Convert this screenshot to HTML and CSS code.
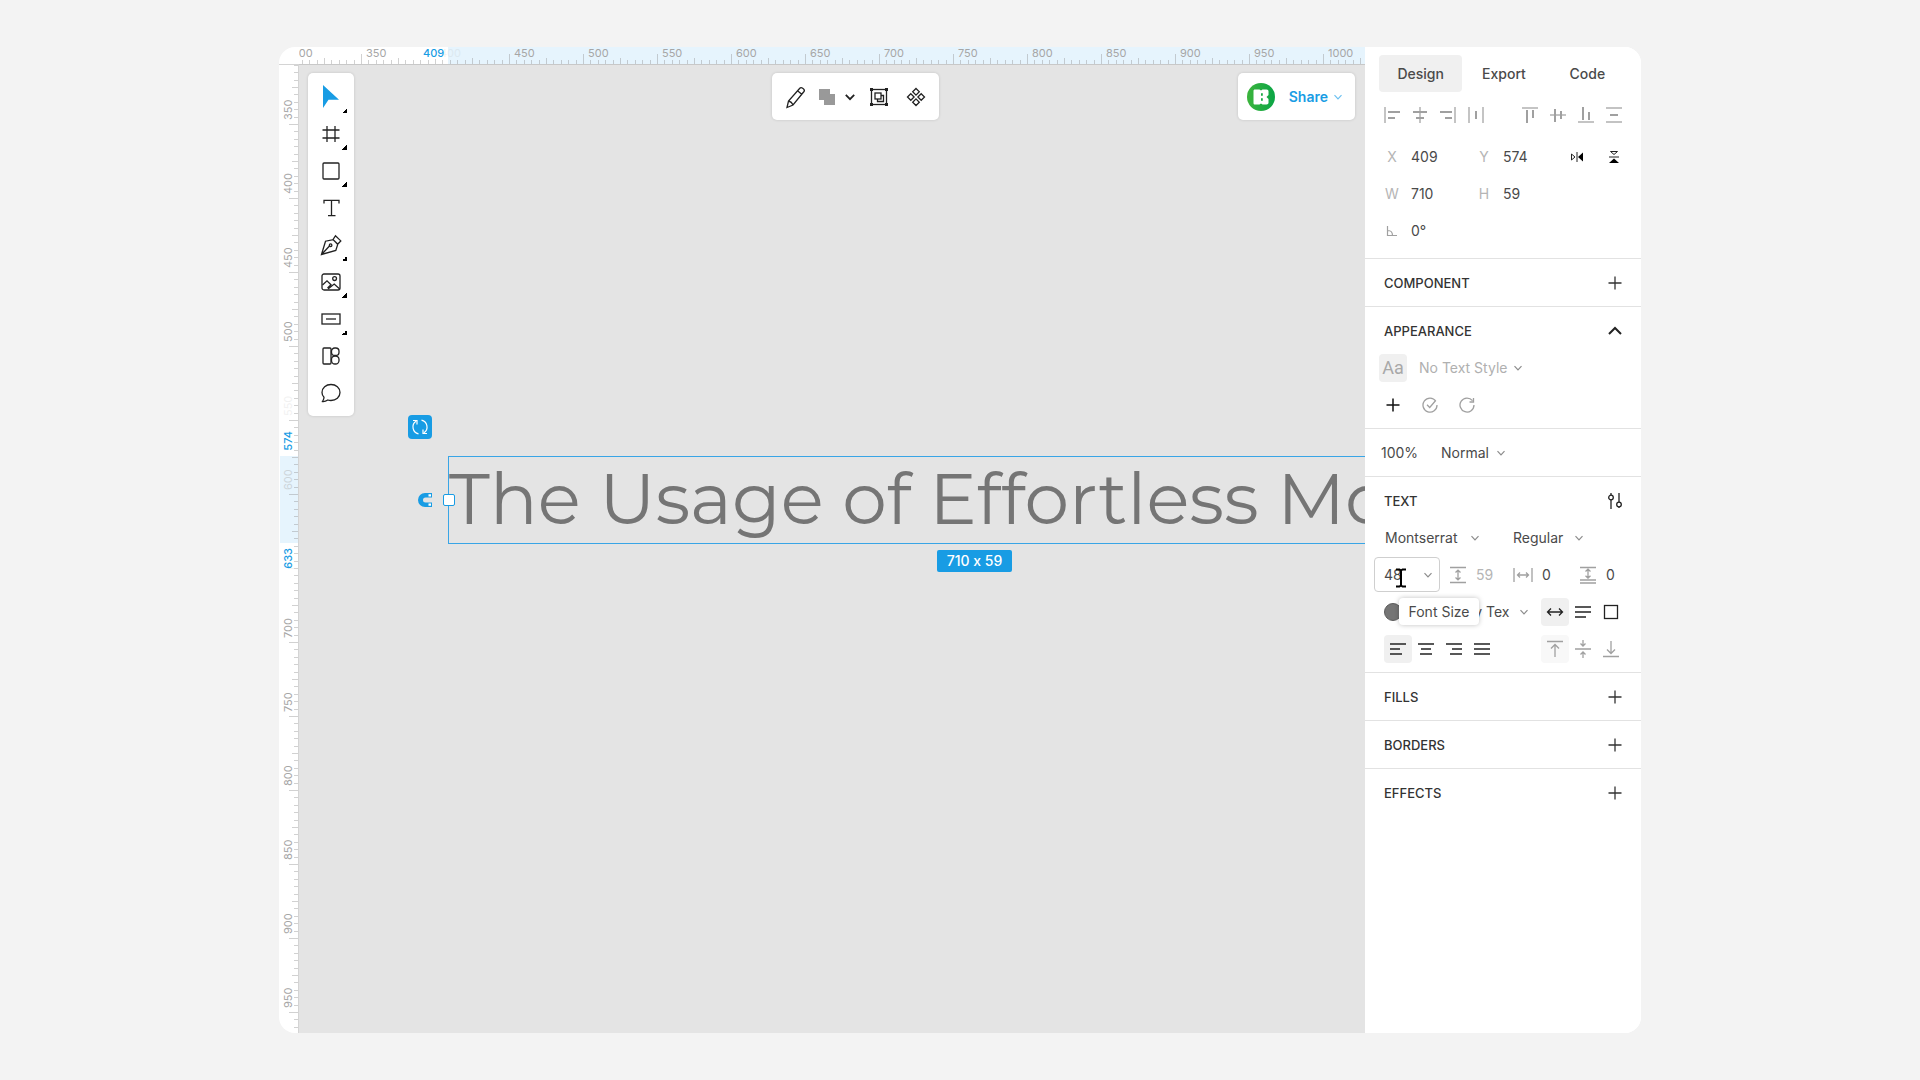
FILE: index.html
```html
<!DOCTYPE html>
<html lang="en">
<head>
<meta charset="utf-8">
<title>Design editor</title>
<link rel="stylesheet" href="styles.css">
</head>
<body>
<svg class="defs" width="0" height="0" aria-hidden="true">
  <symbol id="chev" viewBox="0 0 10 10"><path d="M1.5 3.2 5 6.8 8.500 3.200"/></symbol>
  <symbol id="plus" viewBox="0 0 16 16"><path d="M8 1.500v13M1.500 8h13"/></symbol>
</svg>
<main class="app">
  <div class="ruler-corner"></div>
  <div class="ruler-x" aria-hidden="true">
    <div class="range-x"></div>
    <svg class="ticks" width="100%" height="18">
      <defs><pattern id="tx" width="74" height="18" x="-12" patternUnits="userSpaceOnUse">
        <path class="tick" d="M.5 7v10M7.500 13v4M15.500 13v4M22.500 13v4M30.500 13v4M37.500 11v6M44.500 13v4M52.500 13v4M59.500 13v4M67.500 13v4"/>
      </pattern></defs>
      <rect width="100%" height="18" fill="url(#tx)"/>
    </svg>
    <div class="labels-x"><span>300</span><span>350</span><span class="faint">400</span><span>450</span><span>500</span><span>550</span><span>600</span><span>650</span><span>700</span><span>750</span><span>800</span><span>850</span><span>900</span><span>950</span><span>1000</span></div>
    <div class="mark-x">409</div>
  </div>
  <div class="ruler-y" aria-hidden="true">
    <div class="range-y"></div>
    <svg class="ticks" width="20" height="100%">
      <defs><pattern id="ty" width="20" height="74" y="-15" patternUnits="userSpaceOnUse">
        <path class="tick" d="M10 .5h10M15 7.500h5M15 15.500h5M15 22.500h5M15 30.500h5M13 37.500h7M15 44.500h5M15 52.500h5M15 59.500h5M15 67.500h5"/>
      </pattern></defs>
      <rect width="20" height="100%" fill="url(#ty)"/>
    </svg>
    <div class="labels-y"><span>350</span><span>400</span><span>450</span><span>500</span><span class="faint">550</span><span class="half">600</span><span></span><span>700</span><span>750</span><span>800</span><span>850</span><span>900</span><span>950</span></div>
    <div class="mark-y mark-top">574</div>
    <div class="mark-y mark-bottom">633</div>
  </div>

  <section class="canvas" aria-label="Canvas">
    <div class="text-node">
      <h1 class="title">The Usage of Effortless Motion</h1>
      <span class="handle"></span>
      <svg class="magnet" width="16" height="16" viewBox="0 0 16 16"><path d="M15 1H8a7 7 0 0 0 0 14h7v-4.500H8.500a2.500 2.500 0 0 1 0-5H15z" fill="#189ce4"/><path d="M11.500 2.200h2.500v2.300h-2.500zM11.500 11.500h2.500v2.300h-2.500z" fill="#fff"/></svg>
      <button class="rotate" aria-label="Rotate"><svg width="18" height="18" viewBox="0 0 18 18" fill="none" stroke="#fff" stroke-width="1.200"><path d="M7.500 15.800A7 7 0 0 1 5 3.200M2 2.500h4v4M10.500 2.200A7 7 0 0 1 13 14.800M16 15.500h-4v-4"/></svg></button>
      <span class="size-badge">710 x 59</span>
    </div>

    <div class="tools card" role="toolbar" aria-label="Tools">
      <button class="tool more" aria-label="Move"><svg width="20" height="26" viewBox="0 0 20 26"><path d="M2 1v23l5.500-8.200H18z" fill="#189ce4"/></svg></button>
      <button class="tool more" aria-label="Frame"><svg width="20" height="20" viewBox="0 0 20 20" class="ln"><path d="M6 2v16M14 2v16M1.500 6h17M1.500 14h17"/></svg></button>
      <button class="tool more" aria-label="Rectangle"><svg width="20" height="20" viewBox="0 0 20 20" class="ln"><rect x="2" y="2" width="16" height="16" rx="1"/></svg></button>
      <button class="tool" aria-label="Text"><svg width="20" height="20" viewBox="0 0 20 20" class="ln"><path d="M3 5.500V2.300h15v3.200M10.500 2.300v15.400M7 17.700h7.500"/></svg></button>
      <button class="tool more" aria-label="Pen"><svg width="22" height="22" viewBox="0 0 22 22" class="ln"><path d="M1.500 20.500 5.500 7.200l7.700-1.500 4.600 4.600-2 6.200zM1.500 20.500l8-8.500M13 5.500l2.500-3.700 5.300 5.100-3.200 3.400z"/><circle cx="10.600" cy="11.200" r="1.300"/></svg></button>
      <button class="tool more" aria-label="Image"><svg width="20" height="18" viewBox="0 0 20 18" class="ln"><rect x="1" y="1" width="18" height="16" rx="2"/><circle cx="13.600" cy="5.600" r="1.900"/><path d="M1.500 12 6 7.800l4 4L6.500 15M7 16l6.200-5 5.500 5"/></svg></button>
      <button class="tool more" aria-label="Input"><svg width="20" height="12" viewBox="0 0 20 12" class="ln"><rect x="1" y="1" width="18" height="10"/><path d="M5 6h10"/></svg></button>
      <button class="tool" aria-label="Components"><svg width="20" height="20" viewBox="0 0 20 20" class="ln"><rect x="2" y="2" width="8" height="16" rx="1"/><rect x="10.500" y="2" width="7.500" height="7.500" rx="3.200"/><rect x="10.500" y="10" width="7.500" height="8" rx="3.500"/></svg></button>
      <button class="tool" aria-label="Comment"><svg width="20" height="20" viewBox="0 0 20 20" class="ln"><path d="M1.500 18.500c1-1.500 1.600-2.800 1.500-4.200C1.300 12.600 1 11 1 9.500 1 5 5 1.500 10 1.500s9 3.500 9 8-4 8-9 8c-1.200 0-2.200-.2-3.200-.5-1.500 1-3.300 1.700-5.300 1.500z"/></svg></button>
    </div>

    <div class="actions card" role="toolbar" aria-label="Actions">
      <button aria-label="Edit"><svg width="22" height="24" viewBox="0 0 22 24" class="ln"><path d="M2 22.500 3.500 16 14.800 3.200c1.500-1.600 5.700 1.200 4.200 3.300L8 20zM12.500 5.800l4.300 3.500M3.700 16c1.800.5 3.500 2 4.300 3.800"/></svg></button>
      <button class="wide" aria-label="Union"><svg width="18" height="18" viewBox="0 0 18 18"><path d="M1 1h11v5h5v11H6v-5H1z" fill="#999"/></svg><svg class="chev dark" width="12" height="12"><use href="#chev"/></svg></button>
      <button aria-label="Group"><svg width="20" height="20" viewBox="0 0 20 20" class="ln"><rect x="2.500" y="2.500" width="15" height="15"/><rect x="6" y="6" width="6" height="6"/><path d="M12 8.500h2.500v6h-6V12"/><path d="M1 1h3v3H1zM16 1h3v3h-3zM1 16h3v3H1zM16 16h3v3h-3z" fill="#222" stroke="none"/></svg></button>
      <button aria-label="Create component"><svg width="20" height="20" viewBox="0 0 20 20" class="ln"><path d="m10 1.500 3.300 3.300L10 8.100 6.700 4.800zM10 11.900l3.300 3.300-3.300 3.300-3.300-3.300zM4.800 6.700 8.100 10l-3.300 3.300L1.500 10zM15.200 6.700l3.300 3.300-3.300 3.300-3.300-3.300z"/></svg></button>
    </div>

    <div class="share card">
      <svg class="avatar" width="28" height="28" viewBox="0 0 28 28" role="img" aria-label="Account"><defs><linearGradient id="g" x1="0" x2="1" y1="0" y2="0"><stop offset="0" stop-color="#3db43c"/><stop offset="1" stop-color="#0aa546"/></linearGradient></defs><circle cx="14" cy="14" r="14" fill="url(#g)"/><path d="M8 6.500h4.500l1.500 1 1.500-1h4c1.500 0 2.300 1 2 2.500v3l-2 2 2 2v3c.3 1.500-.5 2.500-2 2.500h-4l-1.500-1-1.500 1H8c-1 0-1.500-.5-1.500-1.500V8c0-1 .5-1.500 1.500-1.500z" fill="#fff"/><path d="M14 10.200h1.800v2.500H14zM14 15.300h1.800v2.500H14z" fill="#18a944"/></svg>
      <button class="share-btn">Share<svg class="chev blue" width="10" height="10"><use href="#chev"/></svg></button>
    </div>
  </section>

  <aside class="panel">
    <nav class="tabs" role="tablist">
      <button class="tab active" role="tab" aria-selected="true">Design</button>
      <button class="tab" role="tab">Export</button>
      <button class="tab" role="tab">Code</button>
    </nav>
    <div class="aligns">
      <div class="group">
        <button aria-label="Align left"><svg width="16" height="16" viewBox="0 0 16 16" class="al"><path d="M1 0v16"/><path class="b" d="M4 5h12M4 11h7"/></svg></button>
        <button aria-label="Align center"><svg width="16" height="16" viewBox="0 0 16 16" class="al"><path d="M8 0v16"/><path class="b" d="M1 5h14M4 11h8"/></svg></button>
        <button aria-label="Align right"><svg width="16" height="16" viewBox="0 0 16 16" class="al"><path d="M15 0v16"/><path class="b" d="M0 5h12M5 11h7"/></svg></button>
        <button aria-label="Distribute horizontally"><svg width="16" height="16" viewBox="0 0 16 16" class="al"><path d="M1 0v16M15 0v16"/><path class="b" d="M8 4v8"/></svg></button>
      </div>
      <div class="group">
        <button aria-label="Align top"><svg width="16" height="16" viewBox="0 0 16 16" class="al"><path d="M0 1h16"/><path class="b" d="M5 3v13M11 3v8"/></svg></button>
        <button aria-label="Align middle"><svg width="16" height="16" viewBox="0 0 16 16" class="al"><path d="M0 8h16"/><path class="b" d="M5 2v13M11 4v8"/></svg></button>
        <button aria-label="Align bottom"><svg width="16" height="16" viewBox="0 0 16 16" class="al"><path d="M0 15h16"/><path class="b" d="M5 0v13M11 5v8"/></svg></button>
        <button aria-label="Distribute vertically"><svg width="16" height="16" viewBox="0 0 16 16" class="al"><path d="M0 1h16M0 15h16"/><path class="b" d="M4 8h8"/></svg></button>
      </div>
    </div>
    <div class="geometry">
      <label class="num"><span>X</span><input value="409"></label>
      <label class="num"><span>Y</span><input value="574"></label>
      <button class="flip" aria-label="Flip horizontal"><svg width="14" height="10" viewBox="0 0 14 10"><path d="M1.500 2v6L5 5z" fill="none" stroke="#222"/><path d="M7 0v10" stroke="#222"/><path d="M13 .5v9L8 5z"/></svg></button>
      <button class="flip" aria-label="Flip vertical"><svg width="12" height="14" viewBox="0 0 12 14"><path d="M2.500 1.500h7L6 4.500z" fill="none" stroke="#222"/><path d="M1 7h10" stroke="#222"/><path d="M1 13h10L6 8.500z"/></svg></button>
      <label class="num"><span>W</span><input value="710"></label>
      <label class="num wrap-end"><span>H</span><input value="59"></label>
      <label class="num"><span><svg width="12" height="12" viewBox="0 0 12 12" class="angle"><path d="M1.500 1v9.500H11M2 5.500c3 0 4.500 2 4.500 5"/></svg></span><input value="0°" aria-label="Rotation"></label>
    </div>

    <section class="sect">
      <div class="row head"><h2>COMPONENT</h2><button aria-label="Add component"><svg class="plus" width="16" height="16"><use href="#plus"/></svg></button></div>
    </section>

    <section class="sect">
      <div class="row head"><h2>APPEARANCE</h2><button aria-label="Collapse"><svg width="16" height="16" viewBox="0 0 16 16" fill="none" stroke="#222" stroke-width="2"><path d="m2 11 6-6 6 6"/></svg></button></div>
      <div class="row style-row"><span class="aa">Aa</span><label class="drop pale"><select class="w-style" aria-label="Text style"><option>No Text Style</option></select><svg class="chev" width="10" height="10"><use href="#chev"/></svg></label></div>
      <div class="row style-acts">
        <button aria-label="Add style"><svg class="plus black" width="16" height="16"><use href="#plus"/></svg></button>
        <button aria-label="Apply style"><svg width="16" height="16" viewBox="0 0 16 16" class="grey"><path d="M13.800 4.200A7 7 0 1 0 15 8M5 7.800l2.700 2.700 6-7"/></svg></button>
        <button aria-label="Reset style"><svg width="16" height="16" viewBox="0 0 16 16" class="grey"><path d="M13.500 3.700A7 7 0 1 0 15 8M14.500 1v4h-4"/></svg></button>
      </div>
    </section>

    <section class="sect">
      <div class="row opacity-row"><input class="opacity" aria-label="Opacity" value="100%"><label class="drop"><select class="w-blend" aria-label="Blend mode"><option>Normal</option></select><svg class="chev" width="10" height="10"><use href="#chev"/></svg></label></div>
    </section>

    <section class="sect">
      <div class="row head"><h2>TEXT</h2><button aria-label="Text settings"><svg width="16" height="16" viewBox="0 0 16 16" class="ln"><path d="M4 6.500V16M4 0v2M12 0v9M12 14v1"/><circle cx="4" cy="4.500" r="2.300"/><circle cx="12" cy="11.500" r="2.300"/></svg></button></div>
      <div class="row font-row">
        <label class="drop"><select class="w-font" aria-label="Font family"><option>Montserrat</option></select><svg class="chev" width="10" height="10"><use href="#chev"/></svg></label>
        <label class="drop"><select class="w-weight" aria-label="Font weight"><option>Regular</option></select><svg class="chev" width="10" height="10"><use href="#chev"/></svg></label>
      </div>
      <div class="row metrics">
        <div class="size-field">
          <input aria-label="Font Size" value="48"><svg class="chev" width="10" height="10"><use href="#chev"/></svg>
          <svg class="ibeam" width="12" height="20" viewBox="0 0 12 20"><path d="M1 1.500h3.500L6 2.500l1.500-1H11M1 18.500h3.500l1.500-1 1.500 1H11M6 2v16" fill="none" stroke="#000" stroke-width="2"/></svg>
          <span class="tooltip" role="tooltip">Font Size</span>
        </div>
        <label class="metric dim"><svg width="18" height="18" viewBox="0 0 18 18" class="grey"><path d="M1 1.500h16M1 16.500h16M9 4.500v9M6.500 6.500 9 4.200l2.500 2.300M6.500 11.500 9 13.800l2.500-2.300"/></svg><input aria-label="Line height" value="59"></label>
        <label class="metric"><svg width="20" height="16" viewBox="0 0 20 16" class="grey"><path d="M1 1v14M19 1v14M4.500 8h11M7 5.500 4.500 8 7 10.500M13 5.500 15.500 8 13 10.500"/></svg><input aria-label="Letter spacing" value="0"></label>
        <label class="metric"><svg width="18" height="18" viewBox="0 0 18 18" class="grey"><path d="M1 1.500h16M1 14h16M1 17h16M9 3.500v8.500M6.500 5.500 9 3.200l2.500 2.300M6.500 9.800 9 12.100l2.500-2.300"/></svg><input aria-label="Paragraph spacing" value="0"></label>
      </div>
      <div class="row color-row">
        <button class="swatch" aria-label="Text color"></button>
        <label class="drop"><select class="w-color" aria-label="Color style"><option>Body Tex</option></select><svg class="chev" width="10" height="10"><use href="#chev"/></svg></label>
        <div class="group end">
          <button class="on" aria-label="Auto width"><svg width="18" height="16" viewBox="0 0 18 16" class="ln"><path d="M1.500 8h15M5 4.500 1.500 8 5 11.500M13 4.500 16.500 8 13 11.500"/></svg></button>
          <button aria-label="Auto height"><svg width="18" height="16" viewBox="0 0 18 16" class="ln"><path d="M1 3h16M1 8h16M1 13h11"/></svg></button>
          <button aria-label="Fixed size"><svg width="16" height="16" viewBox="0 0 16 16" class="ln"><rect x="1.500" y="1.500" width="13" height="13"/></svg></button>
        </div>
      </div>
      <div class="row para-row">
        <div class="group">
          <button class="on" aria-label="Text left"><svg width="18" height="16" viewBox="0 0 18 16" class="ln"><path d="M1 3h16M1 8h10M1 13h12"/></svg></button>
          <button aria-label="Text center"><svg width="18" height="16" viewBox="0 0 18 16" class="ln"><path d="M1 3h16M4 8h10M3 13h12"/></svg></button>
          <button aria-label="Text right"><svg width="18" height="16" viewBox="0 0 18 16" class="ln"><path d="M1 3h16M7 8h10M5 13h12"/></svg></button>
          <button aria-label="Text justify"><svg width="18" height="16" viewBox="0 0 18 16" class="ln"><path d="M1 3h16M1 8h16M1 13h16"/></svg></button>
        </div>
        <div class="group end">
          <button class="on soft" aria-label="Align text top"><svg width="18" height="18" viewBox="0 0 18 18" class="grey"><path d="M1 1.500h16M9 17V5M5 8.500l4-4 4 4"/></svg></button>
          <button aria-label="Align text middle"><svg width="18" height="18" viewBox="0 0 18 18" class="grey"><path d="M1 9h16M9 0v5.500M6.500 3.500 9 6l2.500-2.500M9 18v-5.500M6.500 14.500 9 12l2.500 2.500"/></svg></button>
          <button aria-label="Align text bottom"><svg width="18" height="18" viewBox="0 0 18 18" class="grey"><path d="M1 16.500h16M9 1v12M5 9.500l4 4 4-4"/></svg></button>
        </div>
      </div>
    </section>

    <section class="sect"><div class="row head"><h2>FILLS</h2><button aria-label="Add fill"><svg class="plus" width="16" height="16"><use href="#plus"/></svg></button></div></section>
    <section class="sect"><div class="row head"><h2>BORDERS</h2><button aria-label="Add border"><svg class="plus" width="16" height="16"><use href="#plus"/></svg></button></div></section>
    <section class="sect"><div class="row head"><h2>EFFECTS</h2><button aria-label="Add effect"><svg class="plus" width="16" height="16"><use href="#plus"/></svg></button></div></section>
  </aside>
</main>
</body>
</html>
```
FILE: styles.css
```css
* { box-sizing: border-box; }
body {
  margin: 0;
  min-height: 100vh;
  padding: 47px 279px;
  background: #f3f3f3;
  color: #4a4a4a;
  font: 14px/20px Inter, "Liberation Sans", sans-serif;
}
button, input, select { font: inherit; color: inherit; border: 0; background: none; padding: 0; margin: 0; outline: 0; }
button { display: flex; align-items: center; justify-content: center; }
select { appearance: none; }
svg { display: block; flex: none; }
.defs { position: absolute; }

.app {
  display: grid;
  grid-template-columns: 20px minmax(0, 1fr) 276px;
  grid-template-rows: 18px minmax(0, 1fr);
  min-height: calc(100vh - 94px);
  border-radius: 16px;
  overflow: hidden;
  background: #fff;
}

/* Rulers */
.ruler-corner { border-bottom: 1px solid #d4d4d4; }
.ruler-x, .ruler-y { position: relative; overflow: hidden; font-size: 11px; line-height: 12px; color: #a6a6a6; }
.ruler-x { grid-column: 2; grid-row: 1; border-bottom: 1px solid #c8c8c8; }
.ruler-y { grid-column: 1; grid-row: 2; border-right: 1px solid #d4d4d4; }
.ticks { position: absolute; left: 0; top: 0; }
.tick { stroke: #8c8c8c; stroke-opacity: .4; }
.range-x { position: absolute; left: 149px; right: 0; top: 0; bottom: 0; background: #e6f4fd; }
.range-y { position: absolute; left: 1px; right: 0; top: 391px; height: 87px; background: #e6f4fd; }
.labels-x { position: relative; display: flex; margin-left: -12px; }
.labels-x span { flex: 0 0 74px; padding-left: 5px; }
.labels-y { position: relative; display: flex; flex-direction: column; margin-top: -15px; }
.labels-y span { flex: 0 0 74px; width: 12px; margin-left: 3px; padding-top: 4px; writing-mode: vertical-rl; transform: rotate(180deg); }
.faint { opacity: .15; }
.half { opacity: .4; }
.mark-x, .mark-y { position: absolute; color: #189ce4; font-weight: 500; background: #fff; }
.mark-x { left: 124px; top: 0; }
.mark-y { left: 3px; width: 12px; writing-mode: vertical-rl; transform: rotate(180deg); }
.mark-top { top: 366px; }
.mark-bottom { top: 483px; }

/* Canvas */
.canvas { grid-column: 2; grid-row: 2; position: relative; overflow: hidden; background: #e4e4e4; min-height: 900px; }
.card { position: absolute; top: 8px; background: #fff; border-radius: 5px; box-shadow: 0 0 3px rgba(0, 0, 0, .15); }
.ln { fill: none; stroke: #222; stroke-width: 1.3; }
.chev { fill: none; stroke: #8c8c8c; stroke-width: 1.2; }
.chev.dark { stroke: #222; stroke-width: 1.5; }
.chev.blue { stroke: #6cc0f0; }

.tools { left: 9px; width: 46px; padding: 5px 0; }
.tool { position: relative; width: 46px; height: 37px; }
.more::after { content: ""; position: absolute; right: 7px; bottom: 2px; width: 5px; height: 5px; background: linear-gradient(135deg, transparent 50%, #000 50%); }

.actions { left: 473px; display: flex; align-items: center; height: 47px; padding: 0 5px; }
.actions button { width: 37px; height: 37px; }
.actions .wide { width: 46px; gap: 8px; }

.share { right: 10px; display: flex; align-items: center; gap: 14px; height: 47px; padding: 0 12px 0 9px; }
.share-btn { gap: 5px; color: #189ce4; font-weight: 600; }

.text-node { position: absolute; left: 149px; top: 391px; width: 1051px; height: 88px; border: 1px solid #39a5e6; }
.title { margin: 0; font: 400 71px/84px Montserrat, Inter, sans-serif; color: #757575; white-space: nowrap; }
.handle { position: absolute; left: -6px; top: 37px; width: 12px; height: 12px; background: #fff; border: 1px solid #189ce4; border-radius: 2px; }
.magnet { position: absolute; left: -32px; top: 35px; }
.rotate { position: absolute; left: -41px; top: -42px; width: 24px; height: 24px; border-radius: 4px; background: #189ce4; }
.size-badge { position: absolute; left: 488px; top: 93px; width: 75px; height: 22px; border-radius: 2px; background: #189ce4; color: #fff; line-height: 22px; text-align: center; font-weight: 500; font-feature-settings: "calt" 0; }

/* Panel */
.panel { grid-column: 3; grid-row: 1 / 3; background: #fff; padding-top: 8px; }
.tabs { display: flex; padding: 0 12px 0 14px; }
.tab { flex: 1; height: 37px; border-radius: 4px; font-weight: 500; }
.tab.active { background: #f0f0f0; }
.group { display: flex; }
.group button { width: 28px; height: 28px; border-radius: 4px; }
.group .on { background: #f0f0f0; }
.group .soft { background: #f8f8f8; }
.aligns { display: flex; justify-content: space-between; align-items: center; height: 46px; padding: 0 13px; }
.al { fill: none; stroke: #b0b0b0; stroke-width: 1.5; }
.al .b { stroke-width: 2; stroke: #a0a0a0; }
.geometry { display: grid; grid-template-columns: 92px 84px 37px 37px; grid-auto-rows: 37px; align-items: center; padding: 0 0 9px 17px; }
.num { display: flex; align-items: center; gap: 9px; }
.num span { width: 20px; display: flex; justify-content: center; color: #b5b5b5; }
.num input { width: 50px; }
.wrap-end { grid-column: 2 / 5; }
.angle { fill: none; stroke: #a0a0a0; stroke-width: 1.2; }

.sect { border-top: 1px solid #e2e2e2; padding: 5px 0; }
.row { display: flex; align-items: center; height: 37px; padding: 0 14px; }
.head { justify-content: space-between; padding: 0 18px 0 19px; }
h2 { margin: 0; font-size: 13px; line-height: 20px; font-weight: 500; color: #333; }
.plus { stroke: #333; stroke-width: 1.3; }
.plus.black { stroke: #111; stroke-width: 1.5; }
.grey { fill: none; stroke: #a0a0a0; stroke-width: 1.3; }
.drop { display: flex; align-items: center; }
.pale { color: #b0b0b0; }
.style-row { gap: 12px; }
.aa { width: 28px; height: 28px; border-radius: 4px; background: #f0f0f0; color: #a8a8a8; font: 18px/28px Roboto, Inter, sans-serif; text-align: center; }
.w-style { width: 94px; }
.style-acts { gap: 21px; padding-left: 20px; }
.opacity-row { padding-left: 16px; }
.opacity { width: 60px; }
.w-blend { width: 55px; }
.font-row { padding-left: 20px; gap: 33px; }
.w-font { width: 85px; }
.w-weight { width: 61px; }
.metrics { padding: 0 0 0 9px; }
.size-field { position: relative; flex: none; display: flex; align-items: center; justify-content: space-between; width: 66px; height: 35px; padding: 0 6px 0 9px; border: 1px solid #cfcfcf; border-radius: 4px; }
.size-field input { width: 30px; }
.ibeam { position: absolute; left: 20px; top: 10px; }
.tooltip { position: absolute; left: 24px; top: 40px; width: 80px; height: 27px; border-radius: 4px; background: #fff; line-height: 27px; text-align: center; white-space: nowrap; box-shadow: 0 0 5px rgba(0, 0, 0, .25); }
.metric { flex: none; display: flex; align-items: center; gap: 9px; margin-left: 9px; }
.metric input { width: 28px; }
.dim { color: #b5b5b5; }
.color-row, .para-row { padding: 0 16px 0 19px; }
.swatch { width: 18px; height: 18px; border-radius: 50%; background: #757575; border: 1px solid #5c5c5c; }
.w-color { width: 71px; margin-left: 46px; }
.end { margin-left: auto; }
```
